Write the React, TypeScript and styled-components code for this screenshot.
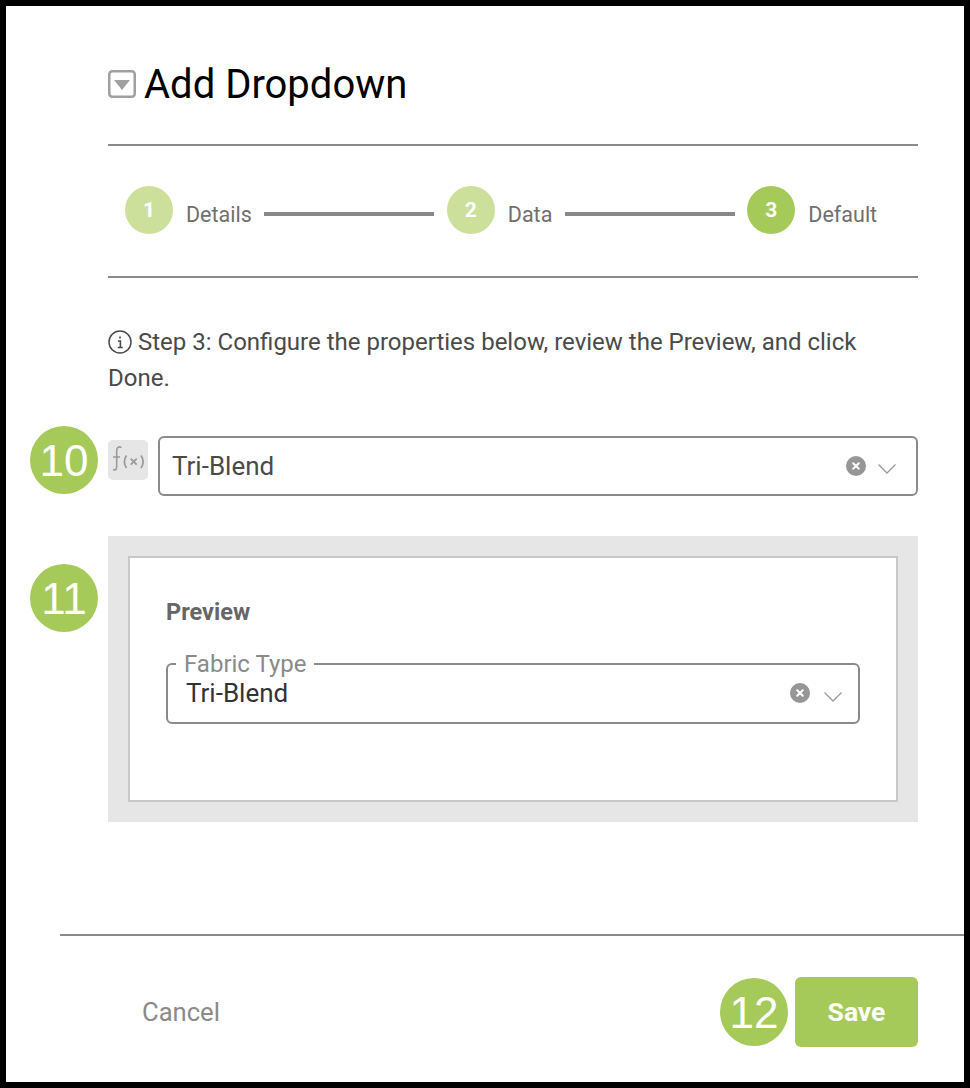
import React from 'react';
import styled, { createGlobalStyle } from 'styled-components';

const GlobalStyle = createGlobalStyle`
  html, body {
    margin: 0;
    padding: 0;
    background: #000;
  }
  body {
    font-family: Roboto, "Liberation Sans", sans-serif;
  }
`;

const Frame = styled.div`
  box-sizing: border-box;
  width: 970px;
  height: 1088px;
  border: 6px solid #000;
  background: #fff;
  display: flex;
  flex-direction: column;
`;

const Content = styled.div`
  flex: 1;
  padding: 0 46px 0 102px;
  display: flex;
  flex-direction: column;
`;

const Header = styled.header`
  height: 140px;
  box-sizing: border-box;
  border-bottom: 2px solid #8a8a8a;
  display: flex;
  align-items: flex-start;
  gap: 8px;
  padding-top: 58px;
`;

const TitleIcon = styled.svg`
  width: 28px;
  height: 28px;
  margin-top: 6px;
  flex: none;
`;

const Title = styled.h1`
  margin: 0;
  font-size: 40px;
  font-weight: 400;
  line-height: 42px;
  color: #000;
`;

const Stepper = styled.div`
  height: 132px;
  box-sizing: border-box;
  border-bottom: 2px solid #8a8a8a;
  padding-left: 17px;
  display: flex;
  align-items: center;
`;

const StepCircle = styled.div<{ $active?: boolean }>`
  width: 48px;
  height: 48px;
  border-radius: 50%;
  background: ${p => (p.$active ? '#a6ca5a' : '#cde09b')};
  color: #fff;
  font-size: 21px;
  font-weight: 700;
  display: flex;
  align-items: center;
  justify-content: center;
  flex: none;
  margin-top: -2px;
  box-sizing: border-box;
`;

const StepLabel = styled.span`
  margin: 8px 12.5px 0 13px;
  font-size: 21.5px;
  color: #6f6f6f;
  line-height: 24px;
`;

const Connector = styled.div`
  width: 170px;
  height: 4px;
  margin: 6px 12.5px 0 0;
  background: #888;
`;

const Intro = styled.p`
  margin: 46px 0 0;
  font-size: 24px;
  line-height: 36px;
  color: #4a4a4a;
`;

const InfoIcon = styled.svg`
  width: 24px;
  height: 24px;
  vertical-align: -4px;
  margin-right: 6px;
`;

const FieldRow = styled.div`
  position: relative;
  margin-top: 40px;
  display: flex;
  gap: 10px;
  align-items: flex-start;
`;

const Badge = styled.div<{ $left?: number; $top?: number }>`
  position: absolute;
  left: ${p => p.$left ?? 0}px;
  top: ${p => p.$top ?? 0}px;
  width: 68px;
  height: 68px;
  border-radius: 50%;
  background: #a6ca5a;
  color: #fff;
  font-family: "Liberation Sans", Arial, sans-serif;
  font-size: 44px;
  line-height: 70px;
  text-align: center;
`;

const FxButton = styled.div`
  width: 40px;
  height: 40px;
  margin-top: 4px;
  border-radius: 5px;
  background: #e6e6e6;
  flex: none;
`;

const SelectBox = styled.div`
  flex: 1;
  height: 60px;
  box-sizing: border-box;
  border: 2px solid #8a8a8a;
  border-radius: 6px;
  display: flex;
  align-items: center;
  padding: 0 20px 0 12px;
  font-size: 26px;
  color: #4a4a4a;
`;

const SelectValue = styled.span`
  flex: 1;
`;

const Panel = styled.section`
  position: relative;
  margin-top: 40px;
  height: 286px;
  box-sizing: border-box;
  background: #e6e6e6;
  padding: 20px;
`;

const PanelInner = styled.div`
  height: 100%;
  box-sizing: border-box;
  background: #fff;
  border: 2px solid #c8c8c8;
  padding: 41px 36px 0;
`;

const PreviewTitle = styled.div`
  font-size: 23.5px;
  font-weight: 700;
  line-height: 26px;
  color: #666;
`;

const Fieldset = styled.fieldset`
  margin: 34px 0 0;
  padding: 0 16px 0 18px;
  height: 65px;
  box-sizing: border-box;
  border: 2px solid #8a8a8a;
  border-radius: 6px;
  display: flex;
  align-items: center;
  font-size: 26px;
  color: #333;
  min-width: 0;
`;

const Legend = styled.legend`
  padding: 0 8px;
  margin-left: -10px;
  font-size: 24px;
  line-height: 10px;
  height: 10px;
  color: #8a8a8a;
`;

const FieldBody = styled.div`
  flex: 1;
  display: flex;
  align-items: center;
  margin-top: -6px;
`;

const ClearIcon = styled.svg`
  width: 20px;
  height: 20px;
  flex: none;
`;

const Chevron = styled.svg<{ $gap: number; $drop: number }>`
  width: 18px;
  height: 10px;
  margin-left: ${p => p.$gap}px;
  margin-top: ${p => p.$drop}px;
  flex: none;
`;

const Footer = styled.footer`
  position: relative;
  margin-left: 54px;
  height: 148px;
  box-sizing: border-box;
  border-top: 2px solid #8a8a8a;
  padding: 41px 46px 0 82px;
  display: flex;
  align-items: flex-start;
  justify-content: space-between;
`;

const CancelButton = styled.button`
  border: none;
  background: none;
  padding: 0;
  height: 70px;
  font-family: inherit;
  font-size: 25.6px;
  color: #8a8a8a;
`;

const SaveButton = styled.button`
  width: 123px;
  height: 70px;
  border: none;
  border-radius: 6px;
  background: #a6ca5a;
  color: #fff;
  padding: 0 0 2px;
  font-family: inherit;
  font-size: 26.5px;
  font-weight: 700;
`;

const Clear = () => (
  <ClearIcon viewBox="0 0 20 20">
    <circle cx="10" cy="10" r="10" fill="#969696" />
    <path d="M7.200 7.200l5.600 5.600M12.800 7.200l-5.600 5.600" stroke="#fff" strokeWidth="2" strokeLinecap="round" />
  </ClearIcon>
);

const Down = ({ gap, drop }: { gap: number; drop: number }) => (
  <Chevron viewBox="0 0 18 10" $gap={gap} $drop={drop}>
    <path d="M.500.500L9 9l8.500-8.500" fill="none" stroke="#9a9a9a" strokeWidth="1.300" />
  </Chevron>
);

const steps = ['Details', 'Data', 'Default'];

const App: React.FC = () => {
  return (
    <Frame>
      <GlobalStyle />
      <Content>
        <Header>
          <TitleIcon viewBox="0 0 28 28">
            <rect x="1.250" y="1.250" width="25.500" height="25.500" rx="3" fill="#fff" stroke="#a0a0a0" strokeWidth="2.500" />
            <path d="M6 10h16l-8 10z" fill="#a0a0a0" />
          </TitleIcon>
          <Title>Add Dropdown</Title>
        </Header>

        <Stepper>
          {steps.map((step, i) => (
            <React.Fragment key={step}>
              <StepCircle $active={i === 2}>{i + 1}</StepCircle>
              <StepLabel>{step}</StepLabel>
              {i < 2 && <Connector />}
            </React.Fragment>
          ))}
        </Stepper>

        <Intro>
          <InfoIcon viewBox="0 0 24 24">
            <circle cx="12" cy="12" r="11" fill="none" stroke="#4a4a4a" strokeWidth="1.500" />
            <path d="M12 6.500v2M10 11h2.400v6.500M9.800 17.500h5" fill="none" stroke="#4a4a4a" strokeWidth="1.600" />
          </InfoIcon>
          Step 3: Configure the properties below, review the Preview, and click Done.
        </Intro>

        <FieldRow>
          <Badge $left={-78} $top={-10}>10</Badge>
          <FxButton>
            <svg width="40" height="40" viewBox="0 0 40 40">
              <path d="M13.500 7.500c-3-1.500-4.800 0-4.800 3v16c0 3-1.500 4-3.700 3M5 17h7" fill="none" stroke="#9a9a9a" strokeWidth="1.600" />
              <path d="M18.500 15.500c-2.800 3.800-2.800 9 0 12.500M33 15.500c2.800 3.800 2.800 9 0 12.500" fill="none" stroke="#9a9a9a" strokeWidth="1.800" />
              <path d="M22.700 18.700l6 6M28.700 18.700l-6 6" fill="none" stroke="#9a9a9a" strokeWidth="1.800" />
            </svg>
          </FxButton>
          <SelectBox>
            <SelectValue>Tri-Blend</SelectValue>
            <Clear />
            <Down gap={12} drop={5} />
          </SelectBox>
        </FieldRow>

        <Panel>
          <Badge $left={-78} $top={28}>11</Badge>
          <PanelInner>
            <PreviewTitle>Preview</PreviewTitle>
            <Fieldset>
              <Legend>Fabric Type</Legend>
              <FieldBody>
                <SelectValue>Tri-Blend</SelectValue>
                <Clear />
                <Down gap={14} drop={8} />
              </FieldBody>
            </Fieldset>
          </PanelInner>
        </Panel>
      </Content>

      <Footer>
        <CancelButton>Cancel</CancelButton>
        <Badge $left={660} $top={42}>12</Badge>
        <SaveButton>Save</SaveButton>
      </Footer>
    </Frame>
  );
};

export default App;
